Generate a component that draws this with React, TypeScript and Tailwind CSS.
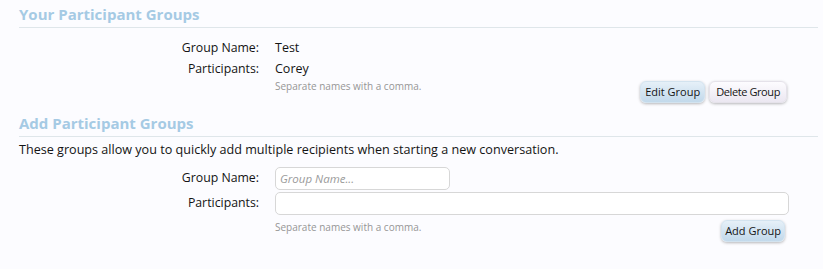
import React from "react";

const font = { fontFamily: '"Open Sans", "DejaVu Sans", sans-serif' };

const btnBlue =
  "h-[22px] rounded-[6px] border border-[#d3e3ef] bg-gradient-to-b from-[#e6f0f8] to-[#c2d9eb] text-[11px] text-[#141414] shadow-[0_1px_3px_rgba(0,0,0,0.28)]";

export default function App() {
  return (
    <div className="w-[823px] h-[269px] bg-[#fcfcff] overflow-hidden" style={font}>
      <div className="pl-[19px] pr-[5px] pt-[4px]">
        <h3 className="text-[15px] font-bold text-[#a5cae4] leading-[20px] pb-[3px] border-b border-[#dfe6ea]">
          Your Participant Groups
        </h3>
        <div className="mt-[9px] grid grid-cols-[256px_1fr] items-center">
          <div className="pr-[16px] text-right text-[12.3px] text-[#141414] leading-[21px]">Group Name:</div>
          <div className="text-[12.5px] text-[#141414] leading-[21px]">Test</div>
          <div className="pr-[16px] text-right text-[12.3px] text-[#141414] leading-[21px]">Participants:</div>
          <div className="text-[12.5px] text-[#141414] leading-[21px]">Corey</div>
          <div />
          <div className="flex items-start justify-between pr-[31px]">
            <div className="text-[10px] text-[#969696] leading-[14px]">Separate names with a comma.</div>
            <div className="flex gap-[4px] mt-[2px]">
              <button className={btnBlue + " px-[4px]"}>Edit Group</button>
              <button className="h-[22px] px-[6px] rounded-[6px] border border-[#e5e2ea] bg-gradient-to-b from-[#fdfcff] to-[#ebe7f1] text-[11px] text-[#141414] tracking-[-0.4px] shadow-[0_1px_3px_rgba(0,0,0,0.28)]">
                Delete Group
              </button>
            </div>
          </div>
        </div>

        <h3 className="mt-[10px] text-[15px] font-bold text-[#a5cae4] leading-[20px] pb-[3px] border-b border-[#dfe6ea]">
          Add Participant Groups
        </h3>
        <p className="mt-[4px] text-[12.6px] text-[#141414] leading-[18px]">
          These groups allow you to quickly add multiple recipients when starting a new conversation.
        </p>
        <div className="mt-[8px] grid grid-cols-[256px_1fr] items-center gap-y-[2px]">
          <div className="pr-[16px] text-right text-[12.3px] text-[#141414]">Group Name:</div>
          <div>
            <input
              placeholder="Group Name..."
              className="block w-[175px] h-[23px] rounded-[5px] border border-[#d7d7d7] bg-white px-[4px] text-[11.5px] italic placeholder:text-[#9a9a9a] outline-none"
            />
          </div>
          <div className="pr-[16px] text-right text-[12.3px] text-[#141414]">Participants:</div>
          <div>
            <input className="block w-[514px] h-[23px] rounded-[5px] border border-[#d7d7d7] bg-white px-[4px] text-[12px] outline-none" />
          </div>
          <div />
          <div className="flex items-start justify-between pr-[33px]">
            <div className="text-[10px] text-[#969696] leading-[14px] mt-[3px]">Separate names with a comma.</div>
            <button className={btnBlue + " mt-[3px] px-[3px]"}>Add Group</button>
          </div>
        </div>
      </div>
    </div>
  );
}
